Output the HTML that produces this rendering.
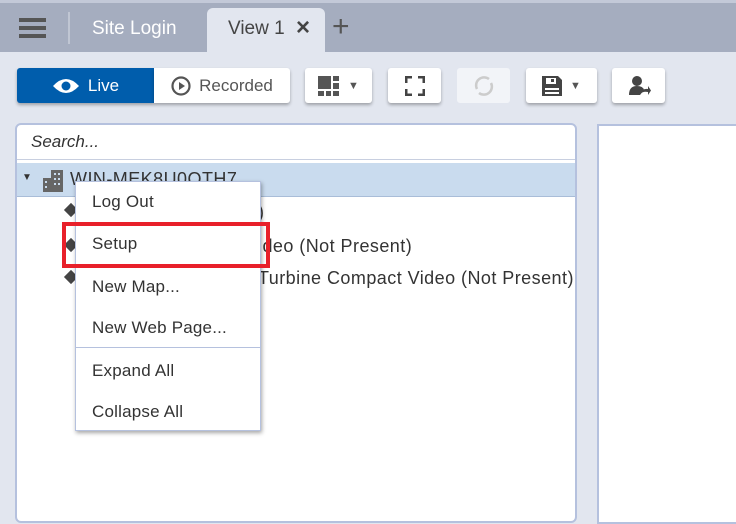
<!DOCTYPE html><html><head><style>
*{box-sizing:border-box;margin:0;padding:0}
body{width:736px;height:517px;overflow:hidden;background:#e2e6ef;font-family:"Liberation Sans",sans-serif;position:relative;color:#333}
.a{position:absolute}
.btn{position:absolute;top:68px;height:35px;background:#fff;border-radius:3px;box-shadow:0 2px 3px rgba(0,0,0,.3);display:flex;align-items:center;justify-content:center;gap:8px;color:#555;font-size:17px}
.mi{position:absolute;left:92px;font-size:17px;color:#333;letter-spacing:.2px}
.t{letter-spacing:.45px}
</style></head><body>
<div class="a" style="left:0;top:0;width:736px;height:52px;background:#a5adbf;border-top:3px solid #c3c9d8"></div>
<div class="a" style="left:19px;top:18px;width:27px;height:4px;background:#555;box-shadow:0 8px 0 #555,0 16px 0 #555"></div>
<div class="a" style="left:68px;top:12px;width:2px;height:32px;background:#c0c6d3"></div>
<div class="a" style="left:92px;top:18px;font-size:19px;color:#fff">Site Login</div>
<div class="a" style="left:207px;top:8px;width:118px;height:44px;background:#e2e6ef;border-radius:6px 6px 0 0"></div>
<div class="a" style="left:228px;top:18px;font-size:19px;color:#444">View 1</div>
<div class="a" style="left:296px;top:14px;font-size:24px;color:#444;font-weight:bold">×</div>
<div class="a" style="left:332px;top:10px;font-size:30px;color:#555">+</div>
<div class="btn" style="left:17px;width:137px;background:#005dac;color:#fff;border-radius:3px 0 0 3px">
<svg width="28" height="16" viewBox="0 0 28 16"><path d="M1 8Q14-6 27 8Q14 22 1 8Z" fill="#fff"/><circle cx="14" cy="8" r="4.5" fill="#005dac"/></svg>Live</div>
<div class="btn" style="left:154px;width:136px;border-radius:0 3px 3px 0">
<svg width="20" height="20"><circle cx="10" cy="10" r="8.5" fill="none" stroke="#555" stroke-width="2.2"/><path d="M8 6L14 10L8 14Z" fill="#555"/></svg>Recorded</div>
<div class="btn" style="left:305px;width:67px"><svg width="22" height="20"><rect x="0" y="0" width="13" height="13" fill="#555"/><rect x="15" y="0" width="6" height="5" fill="#555"/><rect x="15" y="7" width="6" height="6" fill="#555"/><rect x="0" y="15" width="6" height="5" fill="#555"/><rect x="8" y="15" width="5" height="5" fill="#555"/><rect x="15" y="15" width="6" height="5" fill="#555"/></svg><span style="font-size:11px">▼</span></div>
<div class="btn" style="left:388px;width:53px"><svg width="20" height="20" fill="none" stroke="#444" stroke-width="3"><path d="M1 7V1H7M13 1H19V7M19 13V19H13M7 19H1V13"/></svg></div>
<div class="btn" style="left:457px;width:53px;box-shadow:none;background:#f2f4f8"><svg width="22" height="22" fill="none" stroke="#ccc" stroke-width="2.5"><path d="M4 14A8 8 0 0 1 16 4M18 8A8 8 0 0 1 6 18"/></svg></div>
<div class="btn" style="left:526px;width:71px"><svg width="20" height="20"><path d="M0 0H16L20 4V20H0Z" fill="#444"/><rect x="4" y="2" width="10" height="6" fill="#fff"/><rect x="9" y="3" width="3" height="3" fill="#444"/><rect x="3" y="12" width="14" height="2" fill="#fff"/><rect x="3" y="16" width="14" height="2" fill="#fff"/></svg><span style="font-size:11px">▼</span></div>
<div class="btn" style="left:612px;width:53px"><svg width="24" height="22"><circle cx="10" cy="6" r="5" fill="#444"/><path d="M2 20Q2 11 10 11Q16 11 17 15L13 20Z" fill="#444"/><path d="M13 19Q15 13 21 14V11L24 15.5L21 20V17Q16 16 13 19Z" fill="#444"/></svg></div>
<div class="a" style="left:15px;top:123px;width:562px;height:400px;background:#fff;border:2px solid #b5c1de;border-radius:6px;overflow:hidden"></div>
<div class="a" style="left:17px;top:159px;width:558px;height:1px;background:#c8cfe0"></div>
<div class="a" style="left:31px;top:132px;font-size:17px;font-style:italic;color:#333">Search...</div>
<div class="a" style="left:17px;top:163px;width:558px;height:34px;background:#c9dbee;border-bottom:1px solid #a9bdd8"></div>
<div class="a" style="left:22px;top:172px;font-size:10px;color:#333">▼</div>
<svg class="a" style="left:43px;top:170px" width="20" height="22"><rect x="8" y="0" width="12" height="22" fill="#666"/><rect x="0" y="8" width="8" height="14" fill="#666"/><g fill="#c9dbee"><rect x="11" y="3" width="2" height="2"/><rect x="15" y="3" width="2" height="2"/><rect x="11" y="8" width="2" height="2"/><rect x="15" y="8" width="2" height="2"/><rect x="11" y="13" width="2" height="2"/><rect x="15" y="13" width="2" height="2"/><rect x="2" y="11" width="2" height="2"/><rect x="2" y="16" width="2" height="2"/></g></svg>
<div class="a t" style="left:70px;top:169px;font-size:18px;color:#333">WIN-MEK8U0QTH7</div>
<div class="a" style="left:66px;top:205px;width:10px;height:10px;background:#444;transform:rotate(45deg)"></div>
<div class="a" style="left:66px;top:240px;width:10px;height:10px;background:#444;transform:rotate(45deg)"></div>
<div class="a" style="left:66px;top:272px;width:10px;height:10px;background:#444;transform:rotate(45deg)"></div>
<div class="a" style="left:258px;top:202px;font-size:18px">)</div>
<div class="a t" style="left:258px;top:236px;font-size:18px">ideo (Not Present)</div>
<div class="a t" style="left:258px;top:268px;font-size:18px;white-space:nowrap;width:316px;overflow:hidden">Turbine Compact Video (Not Present)</div>
<div class="a" style="left:597px;top:124px;width:150px;height:400px;background:#fff;border:2px solid #b5c1de"></div>
<div class="a" style="left:75px;top:181px;width:186px;height:250px;background:#fff;border:1px solid #b5c1de;box-shadow:1px 2px 4px rgba(0,0,0,.35)"></div>
<div class="mi" style="top:192px">Log Out</div>
<div class="mi" style="top:234px">Setup</div>
<div class="mi" style="top:277px">New Map...</div>
<div class="mi" style="top:318px">New Web Page...</div>
<div class="a" style="left:76px;top:347px;width:184px;height:1px;background:#b5c1de"></div>
<div class="mi" style="top:361px">Expand All</div>
<div class="mi" style="top:402px">Collapse All</div>
<div class="a" style="left:62px;top:222px;width:208px;height:46px;border:4px solid #e8202a"></div>
</body></html>
